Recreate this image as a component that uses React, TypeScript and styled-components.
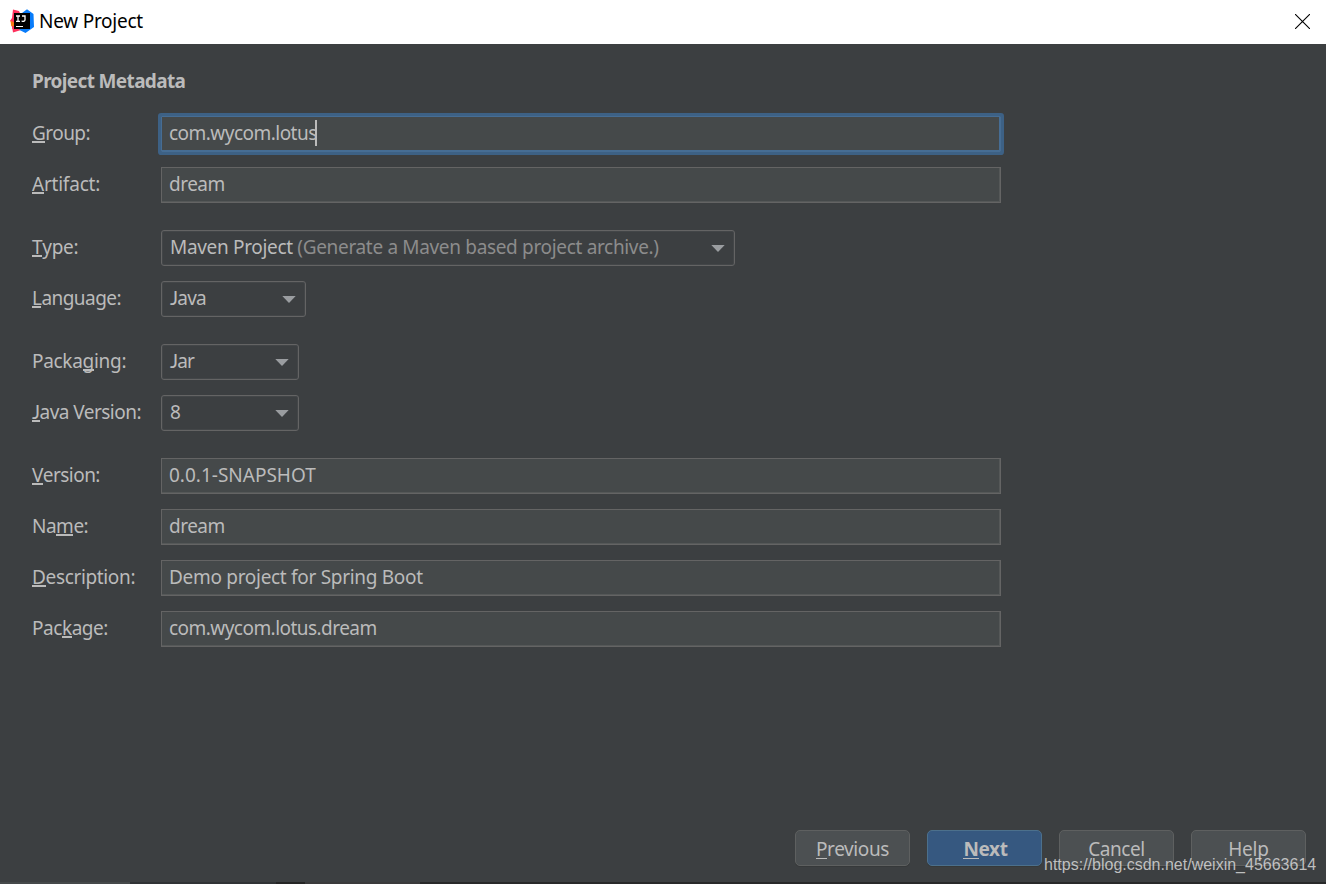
import React from "react";
import styled, { createGlobalStyle, css } from "styled-components";

const GlobalStyle = createGlobalStyle`
  * { box-sizing: border-box; }
  html, body, #root { height: 100%; }
  body {
    margin: 0;
    overflow: hidden;
    background: #3c3f41;
    font-family: "Noto Sans", "Open Sans", sans-serif;
    font-size: 19px;
    color: #bbbbbb;
  }
`;

const Dialog = styled.div`
  position: relative;
  display: flex;
  flex-direction: column;
  width: 1326px;
  height: 884px;
  background: #3c3f41;
`;

const TitleBar = styled.header`
  display: flex;
  align-items: center;
  height: 44px;
  flex: none;
  padding: 0 16px 0 10px;
  background: #ffffff;
  color: #000000;
`;

const AppIcon = styled.svg`
  width: 24px;
  height: 24px;
  margin-bottom: 2px;
`;

const Title = styled.h1`
  flex: 1;
  margin: 0 0 2px 5px;
  font-size: 19px;
  line-height: 24px;
  font-weight: 400;
`;

const CloseButton = styled.button`
  display: flex;
  width: 15px;
  height: 15px;
  margin-bottom: 1px;
  padding: 0;
  border: 0;
  background: none;
`;

const Body = styled.main`
  flex: 1;
  padding: 24px 32px 0;
`;

const SectionTitle = styled.h2`
  margin: 0;
  height: 48px;
  font-size: 19px;
  line-height: 27px;
  font-weight: 700;
`;

const Group = styled.section`
  display: flex;
  flex-direction: column;
  gap: 15px;
  & + & { margin-top: 27px; }
`;

const Row = styled.div`
  display: grid;
  grid-template-columns: 129px 840px;
  height: 36px;
`;

const Label = styled.label`
  line-height: 34px;
  white-space: nowrap;
`;

/* Capital J that rests on the baseline */
const BaselineJ = styled.span`
  font-family: Lato, sans-serif;
  font-size: 19px;
  line-height: 1;
`;

const Mnemonic = styled.span`
  display: inline-block;
  height: 20px;
  line-height: 20px;
  box-shadow: inset 0 -2px 0 #bbbbbb;
`;

const Text = styled.span<{ $track?: number }>`
  letter-spacing: ${(p) => p.$track ?? 0}px;
  white-space: pre;
`;

const Field = styled.div<{ $focused?: boolean }>`
  display: flex;
  align-items: center;
  height: 36px;
  padding: 0 7px 3px;
  border: 1px solid #646464;
  background: #45494a;
  box-shadow: inset -1px -1px 0 #555858;
  ${(p) =>
    p.$focused &&
    css`
      border-color: #466d94;
      box-shadow: 0 0 0 3px #3d6185, inset -1px -1px 0 #466d94;
      border-radius: 1px;
    `}
`;

const Caret = styled.i`
  width: 2px;
  height: 26px;
  margin: 1px 0 0 -2px;
  background: #bbbbbb;
`;

const Combo = styled.div<{ $width: number }>`
  display: flex;
  align-items: center;
  justify-content: space-between;
  width: ${(p) => p.$width}px;
  height: 36px;
  padding: 0 9px 0 8px;
  border: 1px solid #646464;
  border-radius: 3px;
  box-shadow: inset 0 0 0 1px #434648;
  & > span { margin-top: -3px; }
`;

const Hint = styled.span`
  color: #8c8c8c;
`;

const Footer = styled.footer`
  display: flex;
  justify-content: flex-end;
  gap: 17px;
  height: 52px;
  padding-right: 20px;
`;

const Button = styled.button<{ $primary?: boolean }>`
  width: 115px;
  height: 36px;
  padding: 2px 0 0 ${(p) => (p.$primary ? 2 : 0)}px;
  border: 1px solid ${(p) => (p.$primary ? "#4c708c" : "#5e6060")};
  border-radius: 5px;
  background: ${(p) => (p.$primary ? "#365880" : "#4c5052")};
  box-shadow: 0 1px 0 #36393a;
  color: #bbbbbb;
  font: inherit;
  font-weight: ${(p) => (p.$primary ? 700 : 400)};
  line-height: 32px;
`;

const ButtonMnemonic = styled.span`
  display: inline-block;
  height: 20px;
  line-height: 20px;
  box-shadow: inset 0 -1px 0 #bbbbbb;
`;

const BackdropEdge = styled.div`
  display: flex;
  height: 2px;
  background: linear-gradient(to right, #45494a 0 130px, #303335 130px 276px, #252525 276px 305px, #3a3a3b 305px 420px, #28292a 420px);
`;

const Watermark = styled.div`
  position: absolute;
  left: 1044px;
  top: 855px;
  font: 16px/20px "Liberation Sans", Arial, sans-serif;
  color: rgba(215, 215, 215, 0.85);
  white-space: nowrap;
`;

const Logo = () => (
  <AppIcon viewBox="0 0 24 24">
    <path d="M3 .5 9 2 12 9 8 18 2 20 3 14 0 12 2 9Z" fill="#fe315d" />
    <path d="M.5 11.5 5 14 3.5 19 1.2 17Z" fill="#f97a12" />
    <path d="M2 17 8 18 11 21 3 23.5Z" fill="#fe315d" />
    <path d="M12 4 17 .3 23.5 5 24 18 15.5 24 9.5 21 12 12Z" fill="#087cfa" />
    <rect x="4" y="4" width="16" height="16" fill="#000" />
    <path d="M6 7h4M8 7v5.4M6 12.4h4M12 7h3v3.8q0 1.9-3.4 1.4" stroke="#fff" strokeWidth="1.3" fill="none" />
    <path d="M6 17.5h7" stroke="#fff" strokeWidth="1" />
  </AppIcon>
);

const Arrow = () => (
  <svg width="14" height="8" viewBox="0 0 14 8">
    <path d="M.3.9h13.4L7 8Z" fill="#9a9da0" />
  </svg>
);

const Letters = ({ text }: { text: string }) =>
  text.startsWith("J") ? (
    <>
      <BaselineJ>J</BaselineJ>
      {text.slice(1)}
    </>
  ) : (
    <>{text}</>
  );

const Accel = ({ text, at, track }: { text: string; at: number; track?: number }) => (
  <Text $track={track}>
    {text.slice(0, at)}
    <Mnemonic>
      <Letters text={text[at]} />
    </Mnemonic>
    {text.slice(at + 1)}
  </Text>
);

type Item = {
  label: string;
  at: number;
  value: string;
  hint?: string;
  width?: number;
  focused?: boolean;
  labelTrack?: number;
  track?: number;
};

const groups: Item[][] = [
  [
    { label: "Group:", at: 0, labelTrack: -0.55, value: "com.wycom.lotus", track: -0.53, focused: true },
    { label: "Artifact:", at: 0, labelTrack: -0.22, value: "dream", track: -0.5 },
  ],
  [
    {
      label: "Type:",
      at: 0,
      labelTrack: -0.3,
      value: "Maven Project ",
      hint: "(Generate a Maven based project archive.)",
      width: 574,
      track: -0.33,
    },
    { label: "Language:", at: 0, labelTrack: -0.55, value: "Java", width: 145, track: -0.75 },
  ],
  [
    { label: "Packaging:", at: 5, labelTrack: -0.3, value: "Jar", width: 138, track: -0.8 },
    { label: "Java Version:", at: 0, labelTrack: -0.53, value: "8", width: 138 },
  ],
  [
    { label: "Version:", at: 0, labelTrack: -0.55, value: "0.0.1-SNAPSHOT" },
    { label: "Name:", at: 2, labelTrack: -0.5, value: "dream", track: -0.5 },
    { label: "Description:", at: 0, labelTrack: -0.35, value: "Demo project for Spring Boot", track: -0.3 },
    { label: "Package:", at: 3, labelTrack: -0.45, value: "com.wycom.lotus.dream", track: -0.54 },
  ],
];

const FormRow = ({ item }: { item: Item }) => (
  <Row>
    <Label>
      <Accel text={item.label} at={item.at} track={item.labelTrack} />
    </Label>
    {item.width ? (
      <Combo $width={item.width}>
        <Text $track={item.track}>
          <Letters text={item.value} />
          {item.hint && <Hint>{item.hint}</Hint>}
        </Text>
        <Arrow />
      </Combo>
    ) : (
      <Field $focused={item.focused}>
        <Text $track={item.track}>{item.value}</Text>
        {item.focused && <Caret />}
      </Field>
    )}
  </Row>
);

export default function App() {
  return (
    <Dialog>
      <GlobalStyle />
      <TitleBar>
        <Logo />
        <Title>
          <Text $track={-0.25}>New Project</Text>
        </Title>
        <CloseButton aria-label="Close">
          <svg width="15" height="15" viewBox="0 0 15 15">
            <path d="M0 0l15 15M15 0L0 15" stroke="#000" strokeWidth="1.1" />
          </svg>
        </CloseButton>
      </TitleBar>
      <Body>
        <SectionTitle>
          <Text $track={-0.65}>Project Metadata</Text>
        </SectionTitle>
        {groups.map((rows, i) => (
          <Group key={i}>
            {rows.map((item) => (
              <FormRow key={item.label} item={item} />
            ))}
          </Group>
        ))}
      </Body>
      <Footer>
        <Button>
          <Text $track={-0.4}>
            <ButtonMnemonic>P</ButtonMnemonic>revious
          </Text>
        </Button>
        <Button $primary>
          <Text $track={-0.4}>
            <ButtonMnemonic>N</ButtonMnemonic>ext
          </Text>
        </Button>
        <Button>
          <Text $track={-0.4}>Cancel</Text>
        </Button>
        <Button>
          <Text $track={-0.2}>Help</Text>
        </Button>
      </Footer>
      <BackdropEdge />
      <Watermark>https://blog.csdn.net/weixin_45663614</Watermark>
    </Dialog>
  );
}
